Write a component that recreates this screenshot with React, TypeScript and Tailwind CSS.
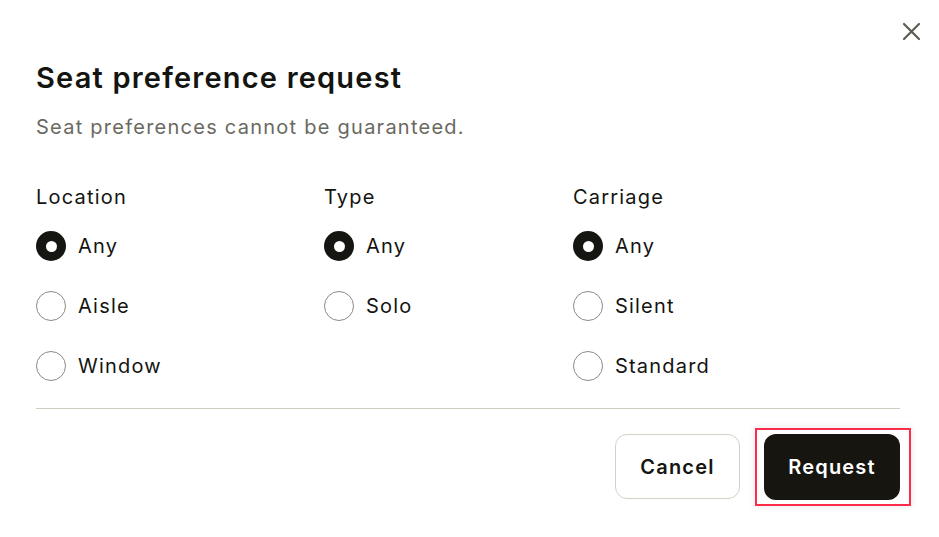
import React, { useState } from "react";

type Group = { label: string; options: string[]; width: string };

const groups: Group[] = [
  { label: "Location", options: ["Any", "Aisle", "Window"], width: "w-[288px]" },
  { label: "Type", options: ["Any", "Solo"], width: "w-[249px]" },
  { label: "Carriage", options: ["Any", "Silent", "Standard"], width: "flex-1" },
];

function Radio({ checked }: { checked: boolean }) {
  return checked ? (
    <span className="flex h-[30px] w-[30px] shrink-0 items-center justify-center rounded-full bg-[#151511]">
      <span className="h-[11px] w-[11px] rounded-full bg-white" />
    </span>
  ) : (
    <span className="h-[30px] w-[30px] shrink-0 rounded-full border-[1.5px] border-[#8c8b82] bg-white" />
  );
}

export default function App() {
  const [sel, setSel] = useState<Record<string, string>>({
    Location: "Any",
    Type: "Any",
    Carriage: "Any",
  });
  return (
    <div
      className="relative h-[537px] w-[939px] bg-white pl-[36px] pr-[39px] pt-[60px] text-[#141411]"
      style={{ fontFamily: "Inter, 'Noto Sans', sans-serif" }}
    >
      <button className="absolute right-[18px] top-[21px] flex h-[20px] w-[20px] items-center justify-center text-[#5d5d56]">
        <svg width="19" height="19" viewBox="0 0 19 19" fill="none">
          <path d="M2 2L17 17M17 2L2 17" stroke="currentColor" strokeWidth="2.2" strokeLinecap="round" />
        </svg>
      </button>
      <h1 className="text-[29px] font-semibold leading-[36px] tracking-[1.2px]">Seat preference request</h1>
      <p className="mt-[17px] text-[20px] leading-[28px] tracking-[1.25px] text-[#6a695f]">
        Seat preferences cannot be guaranteed.
      </p>
      <div className="mt-[42px] flex">
        {groups.map((g) => (
          <div key={g.label} className={g.width}>
            <div className="text-[20px] leading-[28px] tracking-[1.2px]">{g.label}</div>
            <div className="mt-[20px] flex flex-col gap-[30px]">
              {g.options.map((o) => (
                <label
                  key={o}
                  className="flex h-[30px] cursor-pointer items-center gap-[12px]"
                  onClick={() => setSel({ ...sel, [g.label]: o })}
                >
                  <Radio checked={sel[g.label] === o} />
                  <span className="text-[20px] leading-[28px] tracking-[1.2px]">{o}</span>
                </label>
              ))}
            </div>
          </div>
        ))}
      </div>
      <div className="mt-[27px] h-px bg-[#cfcdc2]" />
      <div className="mt-[25px] flex items-start justify-end gap-[24px]">
        <button className="h-[65px] w-[125px] rounded-[12px] border border-[#d3d1c6] bg-white text-[20px] font-semibold tracking-[1.2px] text-[#151511]">
          Cancel
        </button>
        <div className="relative">
          <span className="pointer-events-none absolute -bottom-[6px] -left-[9px] -right-[11px] -top-[6px] border-[2.5px] border-[#ff2b4a] shadow-[0_0_8px_rgba(0,0,0,0.1)]" />
          <button className="relative h-[66px] w-[136px] rounded-[12px] bg-[#161510] text-[20px] font-semibold tracking-[1.2px] text-white">
            Request
          </button>
        </div>
      </div>
    </div>
  );
}
